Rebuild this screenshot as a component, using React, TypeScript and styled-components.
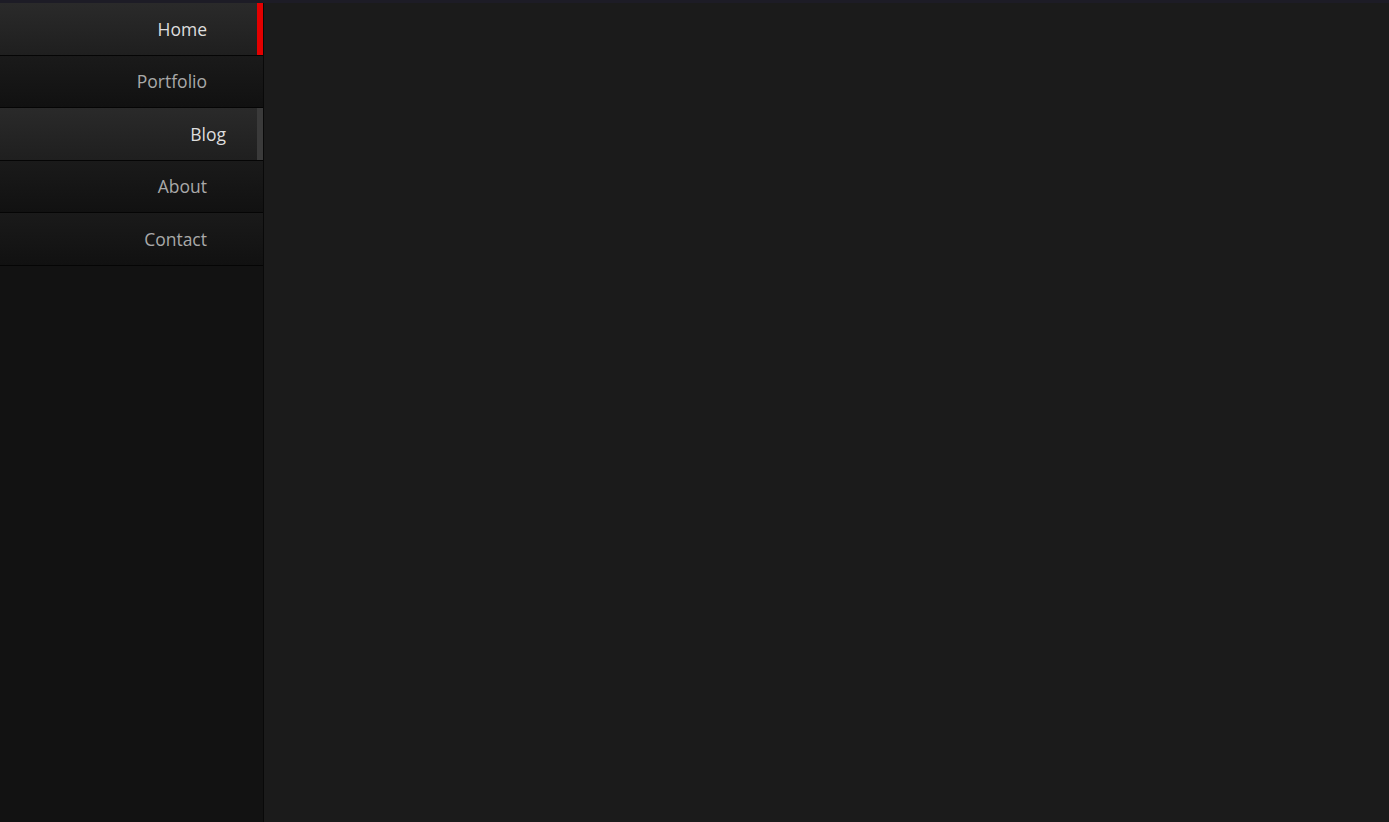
import React from 'react';
import styled, { createGlobalStyle, css } from 'styled-components';

const GlobalStyle = createGlobalStyle`
  html, body {
    margin: 0;
    padding: 0;
    height: 100%;
    background: #1b1b1b;
  }
  #root {
    height: 100%;
  }
`;

const Page = styled.div`
  display: flex;
  flex-direction: column;
  height: 100vh;
  overflow: hidden;
  font-family: 'Open Sans', 'Noto Sans', sans-serif;
`;

const TopStrip = styled.div`
  height: 3px;
  background: #1d1c26;
  flex-shrink: 0;
`;

const Body = styled.div`
  display: flex;
  flex: 1;
`;

const Sidebar = styled.nav`
  width: 263px;
  background: #121212;
  border-right: 1px solid #090909;
  display: flex;
  flex-direction: column;
`;

const Main = styled.main`
  flex: 1;
  background: #1b1b1b;
`;

type ItemProps = { $state?: 'active' | 'hover' };

const Item = styled.a<ItemProps>`
  position: relative;
  height: 52.5px;
  flex-shrink: 0;
  display: flex;
  align-items: center;
  justify-content: flex-end;
  padding-right: 56px;
  box-sizing: border-box;
  border-bottom: 1px solid #050505;
  background: linear-gradient(#1a1a1a, #111111);
  color: #a9a9a9;
  font-size: 17.5px;
  text-decoration: none;
  ${({ $state }) =>
    $state &&
    css`
      background: linear-gradient(#2a2a2a, #1f1f1f);
      color: #dedede;
    `}
  ${({ $state }) =>
    $state === 'hover' &&
    css`
      padding-right: 37px;
    `}
  &::after {
    content: '';
    position: absolute;
    top: 0;
    bottom: 0;
    right: 0;
    width: 6px;
    background: ${({ $state }) =>
      $state === 'active' ? '#e30000' : $state === 'hover' ? '#3a3a3a' : 'transparent'};
  }
`;

const items: { label: string; state?: 'active' | 'hover' }[] = [
  { label: 'Home', state: 'active' },
  { label: 'Portfolio' },
  { label: 'Blog', state: 'hover' },
  { label: 'About' },
  { label: 'Contact' },
];

export default function App() {
  return (
    <Page>
      <GlobalStyle />
      <TopStrip />
      <Body>
        <Sidebar>
          {items.map((it) => (
            <Item key={it.label} href="#" $state={it.state}>
              {it.label}
            </Item>
          ))}
        </Sidebar>
        <Main />
      </Body>
    </Page>
  );
}
